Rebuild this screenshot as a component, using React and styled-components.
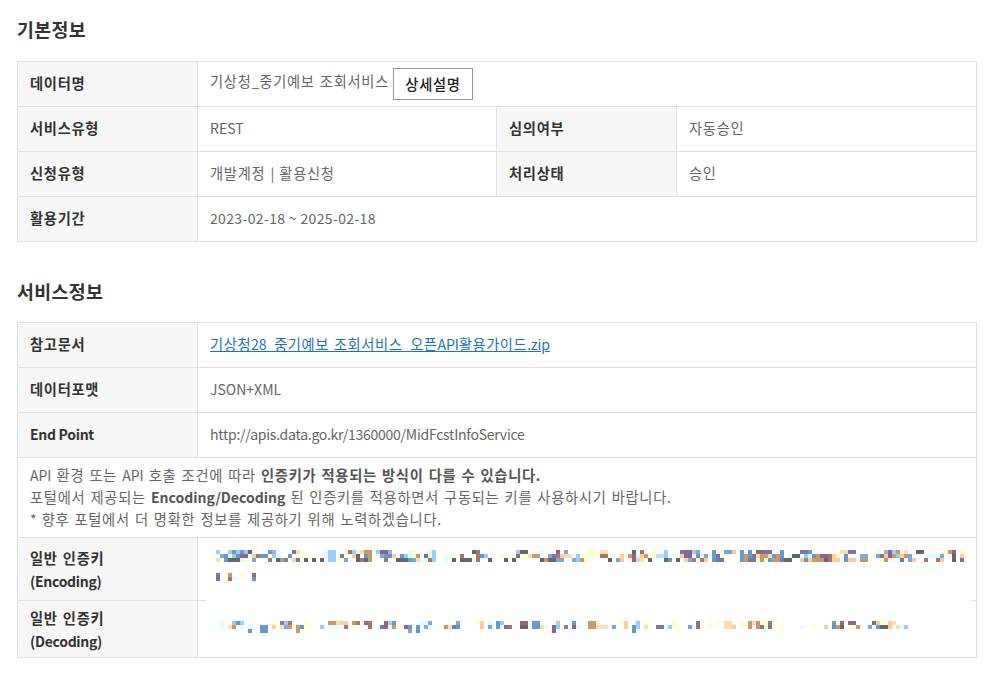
import React from 'react';
import styled, { createGlobalStyle } from 'styled-components';

const Global = createGlobalStyle`
  html, body { margin: 0; padding: 0; background: #fff; }
  body { font-family: "Noto Sans CJK KR", "Noto Sans", sans-serif; font-size: 14px; color: #666; }
`;

const Page = styled.main`
  width: 985px;
  height: 677px;
  box-sizing: border-box;
  padding: 17px 8px 0 17px;
  overflow: hidden;
`;
const Hangul = styled.span`
  font-size: 1.02em;
  line-height: 1;
  letter-spacing: 0.05em;
  word-spacing: 1.2px;
`;
const Title = styled.h2`
  margin: 0 0 ${p => p.$gap}px;
  font-size: 18px;
  line-height: 24px;
  font-weight: 700;
  color: #333;
  ${Hangul} { letter-spacing: 0.02em; }
`;
const TableWrap = styled.div`
  position: relative;
  width: 960px;
  margin-bottom: 37px;
`;
const Table = styled.table`
  width: 959px;
  table-layout: fixed;
  border-collapse: collapse;
`;
const Row = styled.tr`
  height: ${p => p.$h}px;
`;
const Head = styled.th`
  box-sizing: border-box;
  padding: 0 12px 2px;
  border: 1px solid #e1e1e1;
  background: #f7f7f7;
  color: #333;
  font-size: 14px;
  font-weight: 700;
  line-height: 23px;
  letter-spacing: ${p => p.$track || 0}px;
  text-align: left;
`;
const KeyHead = styled(Head)`
  padding: 2px 12px 0;
`;
const Cell = styled.td`
  box-sizing: border-box;
  padding: 0 12px 2px;
  border: 1px solid #e1e1e1;
  color: #666;
  font-size: 14px;
  line-height: 22px;
  letter-spacing: ${p => p.$track || 0}px;
`;
const Note = styled(Cell)`
  padding: 6px 12px 7px;
`;
const Strong = styled.strong`
  font-weight: 700;
  color: #555;
`;
const DetailButton = styled.button`
  box-sizing: border-box;
  width: 80px;
  height: 32px;
  margin: 2px 0 0 4px;
  padding: 0;
  border: 1px solid #999;
  background: #fff;
  color: #222;
  font: 500 14px "Noto Sans CJK KR", sans-serif;
  vertical-align: middle;
`;
const FileLink = styled.a`
  color: #1a73c8;
  letter-spacing: -0.1px;
  text-decoration: underline;
  ${Hangul} { letter-spacing: 0.04em; }
`;
const Mosaic = styled.svg`
  position: absolute;
  left: 189px;
  top: 216px;
  display: block;
`;

function K({ children }) {
  const parts = String(children).split(/([\uac00-\ud7a3 ]+)/);
  return parts.map((part, i) => (i % 2 ? <Hangul key={i}>{part}</Hangul> : part));
}

const palette = {
  L: '#99ccff', B: '#6699cc', I: '#7777aa', D: '#666666', O: '#cc9966', F: '#ffcc99',
  Y: '#ffffcc', C: '#ddffff', P: '#886699', R: '#aa7766', M: '#996677', A: '#77aadd',
  T: '#ffddaa', V: '#aaaacc', E: '#bbddff', G: '#777766',
};

const blurRows = [
  [0, 'L..LBLBLD....BVC...IT......CLL..YRLCTOO.LPPV....CY...CL.........DR.........LDD...C...M.A.....YY.TT......D.R..Y..L...IPPLA...B..AAF.B.B.MMII..B....IIB.......TTII.....Y.VPLO.T..DD.....YOP.Y'],
  [1, '.AB.LBPP.FRBB.LC..B..Y.Y...CLL.IY.FD.BO.YABBF.BLCYO.GCL..CY..R...RBL...Y.Y.MYYTOO..AIRFTT.L.YYY.RR..YFYOPCFO.YEEL...FPP.BCA.BIY....BOBITOOTBOB.CDD.L.BOPPRFY.B...AA..AIFPOLFOA...CCCCA..D.F'],
  [2, 'T.BDDDCY.A...R.DAR.FI.D.D.D.LLYYA..DRDO...R..DDDBATCCRL..C.D.DDDCR..DC..D.D......DODDAA..ALOY.....D.AF.CPFT.D...DB.D.FAR.RF.BII....BOIIYOYBOOIDD..FBFOOODRFF.BFF.OO...YOC..I.AF..R..RF..D.I'],
  [5.75, 'I.YO..Y..M'],
  [6.75, 'I..RC....B'],
];

const sparse = [
  [18, [[1, 'C'], [4, 'LBL'], [14, 'Y'], [16, 'RLR'], [22, 'Y'], [28, 'OOTFF'], [34, 'OR'], [37, 'MR'], [42, 'MLB'], [51, 'C'], [53, 'A'], [60, 'A'], [65, 'YF'], [68, 'C'], [70, 'BL'], [76, 'MM'], [79, 'BB'], [85, 'L'], [88, 'CB'], [93, 'OOC'], [101, 'YF'], [105, 'L'], [107, 'Y'], [114, 'Y'], [120, 'IY'], [123, 'Y'], [125, 'Y'], [127, 'TT'], [131, 'Y'], [133, 'OTOYYR'], [154, 'B'], [156, 'M'], [158, 'PP'], [164, 'GFYCFT']]],
  [19, [[1, 'C'], [3, 'TO'], [6, 'C'], [8, 'C'], [11, 'BB'], [14, 'F'], [16, 'TAOCOBYY'], [26, 'L'], [28, 'CCC'], [32, 'R'], [38, 'R'], [41, 'IMCO'], [47, 'PB'], [50, 'BCA'], [53, 'C'], [57, 'OTIB'], [66, 'F'], [68, 'A'], [70, 'BCPR'], [76, 'DD'], [79, 'BBTC'], [84, 'PL'], [87, 'R'], [89, 'PC'], [93, 'OOTTT'], [99, 'A'], [102, 'F'], [104, 'BL'], [107, 'T'], [110, 'IICLYY'], [118, 'A'], [120, 'IY'], [123, 'Y'], [127, 'TTF'], [131, 'Y'], [133, 'O'], [135, 'OIYIY'], [141, 'Y'], [146, 'C'], [149, 'Y'], [152, 'F'], [154, 'BOD'], [158, 'YYO'], [163, 'A'], [165, 'BDDF'], [170, 'TCL']]],
  [20, [[8, 'B'], [11, 'BB'], [20, 'O'], [48, 'A'], [50, 'B'], [84, 'P'], [104, 'B'], [115, 'Y'], [141, 'Y']]],
];

const cells = [];
blurRows.forEach(([row, text]) => {
  [...text].forEach((ch, col) => {
    if (palette[ch]) cells.push({ x: col * 4 + 10, y: row * 4 + 12, fill: palette[ch] });
  });
});
sparse.forEach(([row, runs]) => {
  runs.forEach(([start, text]) => {
    [...text].forEach((ch, i) => {
      cells.push({ x: (start + i) * 4 + 10, y: row * 4 + 11, fill: palette[ch] });
    });
  });
});

export default function App() {
  return (
    <>
      <Global />
      <Page>
        <Title $gap={20}><K>기본정보</K></Title>
        <TableWrap>
          <Table>
            <colgroup>
              <col width="180" /><col width="299" /><col width="180" /><col width="300" />
            </colgroup>
            <tbody>
              <Row $h={45}>
                <Head><K>데이터명</K></Head>
                <Cell colSpan={3}><K>기상청_중기예보 조회서비스</K><DetailButton><K>상세설명</K></DetailButton></Cell>
              </Row>
              <Row $h={45}>
                <Head><K>서비스유형</K></Head><Cell>REST</Cell>
                <Head><K>심의여부</K></Head><Cell><K>자동승인</K></Cell>
              </Row>
              <Row $h={45}>
                <Head><K>신청유형</K></Head><Cell><K>개발계정 | 활용신청</K></Cell>
                <Head><K>처리상태</K></Head><Cell><K>승인</K></Cell>
              </Row>
              <Row $h={45}>
                <Head><K>활용기간</K></Head><Cell colSpan={3} $track={0.35}>2023-02-18 ~ 2025-02-18</Cell>
              </Row>
            </tbody>
          </Table>
        </TableWrap>
        <Title $gap={19}><K>서비스정보</K></Title>
        <TableWrap>
          <Table>
            <colgroup>
              <col width="180" /><col width="779" />
            </colgroup>
            <tbody>
              <Row $h={45}>
                <Head><K>참고문서</K></Head>
                <Cell><FileLink href="#"><K>기상청28_중기예보 조회서비스_오픈API활용가이드.zip</K></FileLink></Cell>
              </Row>
              <Row $h={45}><Head><K>데이터포맷</K></Head><Cell>JSON+XML</Cell></Row>
              <Row $h={45}><Head $track={-0.3}>End Point</Head><Cell $track={-0.25}>http://apis.data.go.kr/1360000/MidFcstInfoService</Cell></Row>
              <tr>
                <Note colSpan={2}>
                  <K>API 환경 또는 API 호출 조건에 따라 </K><Strong><K>인증키가 적용되는 방식이 다를 수 있습니다.</K></Strong><br />
                  <K>포털에서 제공되는 </K><Strong>Encoding/Decoding</Strong><K> 된 인증키를 적용하면서 구동되는 키를 사용하시기 바랍니다.</K><br />
                  <K>* 향후 포털에서 더 명확한 정보를 제공하기 위해 노력하겠습니다.</K>
                </Note>
              </tr>
              <Row $h={63}><KeyHead $track={-0.3}><K>일반 인증키</K><br />(Encoding)</KeyHead><Cell /></Row>
              <Row $h={57}><KeyHead $track={-0.3}><K>일반 인증키</K><br />(Decoding)</KeyHead><Cell /></Row>
            </tbody>
          </Table>
          <Mosaic width="765" height="119" viewBox="0 0 765 119" shapeRendering="crispEdges" aria-hidden="true">
            <rect width="765" height="119" fill="#fff" />
            {cells.map((c, i) => <rect key={i} x={c.x} y={c.y} width="4" height="4" fill={c.fill} />)}
          </Mosaic>
        </TableWrap>
      </Page>
    </>
  );
}
